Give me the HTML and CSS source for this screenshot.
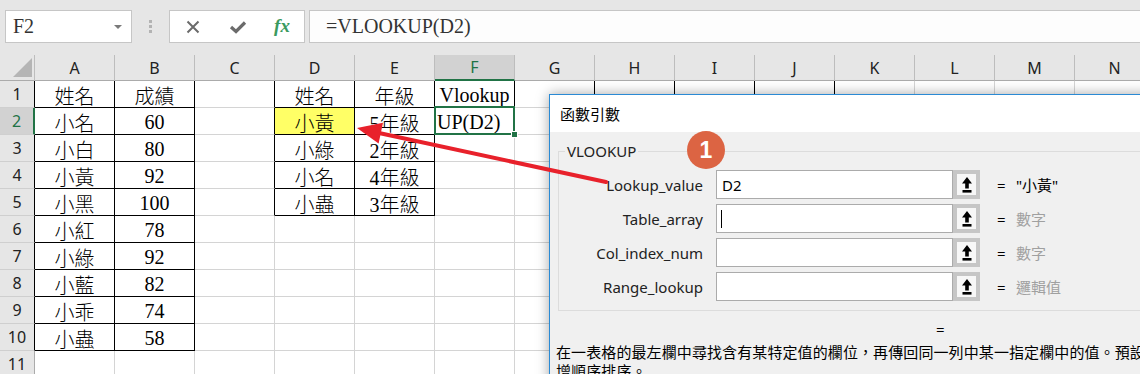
FILE: index.html
```html
<!DOCTYPE html>
<html lang="zh-Hant">
<head>
  <meta charset="UTF-8" />
  <title>VLOOKUP 函數引數</title>
  <link rel="stylesheet" href="styles.css">
</head>
<body>

  <div class="toolbar">
    <div class="namebox">F2<span class="caret-down"></span></div>
    <div class="grip"><span></span><span></span><span></span></div>
    <div class="fx-buttons">
      <svg width="14" height="14" viewBox="0 0 14 14"><path d="M1.5 1.5 L12.5 12.5 M12.5 1.5 L1.5 12.5" stroke="#6b6b6b" stroke-width="2" fill="none"/></svg>
      <svg width="18" height="14" viewBox="0 0 18 14"><path d="M2 7 L7 11.5 L16 2.5" stroke="#6b6b6b" stroke-width="3.2" fill="none"/></svg>
      <span class="fx">fx</span>
    </div>
    <div class="formula">=VLOOKUP(D2)</div>
  </div>

  <div class="sheet">
    <!-- encabezado de columnas -->
    <div class="corner"></div>
    <div class="ch">A</div><div class="ch">B</div><div class="ch">C</div><div class="ch">D</div><div class="ch">E</div>
    <div class="ch on">F</div><div class="ch">G</div><div class="ch">H</div><div class="ch">I</div><div class="ch">J</div>
    <div class="ch">K</div><div class="ch">L</div><div class="ch">M</div><div class="ch">N</div>

    <div class="rh kr">1</div><div class="k">姓名</div><div class="k">成績</div><div class="kr"></div><div class="k">姓名</div><div class="k">年級</div>
    <div class="kr">Vlookup</div><div class="kr"></div><div class="kr"></div><div class="kr"></div><div class="kr"></div><div></div><div></div><div></div><div></div>

    <div class="rh kr on">2</div><div class="k">小名</div><div class="k">60</div><div class="kr"></div><div class="k yl">小黃</div><div class="k">5年級</div>
    <div class="sel">UP(D2)</div><div></div><div></div><div></div><div></div><div></div><div></div><div></div><div></div>

    <div class="rh kr">3</div><div class="k">小白</div><div class="k">80</div><div class="kr"></div><div class="k">小綠</div><div class="k">2年級</div>
    <div></div><div></div><div></div><div></div><div></div><div></div><div></div><div></div><div></div>

    <div class="rh kr">4</div><div class="k">小黃</div><div class="k">92</div><div class="kr"></div><div class="k">小名</div><div class="k">4年級</div>
    <div></div><div></div><div></div><div></div><div></div><div></div><div></div><div></div><div></div>

    <div class="rh kr">5</div><div class="k">小黑</div><div class="k">100</div><div class="kr"></div><div class="k">小蟲</div><div class="k">3年級</div>
    <div></div><div></div><div></div><div></div><div></div><div></div><div></div><div></div><div></div>

    <div class="rh kr">6</div><div class="k">小紅</div><div class="k">78</div><div></div><div></div><div></div>
    <div></div><div></div><div></div><div></div><div></div><div></div><div></div><div></div><div></div>

    <div class="rh kr">7</div><div class="k">小綠</div><div class="k">92</div><div></div><div></div><div></div>
    <div></div><div></div><div></div><div></div><div></div><div></div><div></div><div></div><div></div>

    <div class="rh kr">8</div><div class="k">小藍</div><div class="k">82</div><div></div><div></div><div></div>
    <div></div><div></div><div></div><div></div><div></div><div></div><div></div><div></div><div></div>

    <div class="rh kr">9</div><div class="k">小乖</div><div class="k">74</div><div></div><div></div><div></div>
    <div></div><div></div><div></div><div></div><div></div><div></div><div></div><div></div><div></div>

    <div class="rh kr">10</div><div class="k">小蟲</div><div class="k">58</div><div></div><div></div><div></div>
    <div></div><div></div><div></div><div></div><div></div><div></div><div></div><div></div><div></div>

    <div class="rh">11</div><div></div><div></div><div></div><div></div><div></div>
    <div></div><div></div><div></div><div></div><div></div><div></div><div></div><div></div><div></div>
  </div>

  <!-- ventana de argumentos -->
  <div class="dialog">
    <div class="dialog-title">函數引數</div>
    <fieldset class="args">
      <legend>VLOOKUP</legend>
      <div class="arg-grid">
        <label>Lookup_value</label>
        <div class="arg-input">D2</div>
        <div class="ref-btn"><svg width="12" height="18" viewBox="0 0 12 18"><path d="M6 1 L11 7.5 L7.8 7.5 L7.8 12.5 L4.2 12.5 L4.2 7.5 L1 7.5 Z"/><rect x="1.5" y="14" width="9" height="2.6"/></svg></div>
        <span class="eq">=</span>
        <span class="val">"小黃"</span>

        <label>Table_array</label>
        <div class="arg-input"><span class="text-caret"></span></div>
        <div class="ref-btn"><svg width="12" height="18" viewBox="0 0 12 18"><path d="M6 1 L11 7.5 L7.8 7.5 L7.8 12.5 L4.2 12.5 L4.2 7.5 L1 7.5 Z"/><rect x="1.5" y="14" width="9" height="2.6"/></svg></div>
        <span class="eq">=</span>
        <span class="val hint">數字</span>

        <label>Col_index_num</label>
        <div class="arg-input"></div>
        <div class="ref-btn"><svg width="12" height="18" viewBox="0 0 12 18"><path d="M6 1 L11 7.5 L7.8 7.5 L7.8 12.5 L4.2 12.5 L4.2 7.5 L1 7.5 Z"/><rect x="1.5" y="14" width="9" height="2.6"/></svg></div>
        <span class="eq">=</span>
        <span class="val hint">數字</span>

        <label>Range_lookup</label>
        <div class="arg-input"></div>
        <div class="ref-btn"><svg width="12" height="18" viewBox="0 0 12 18"><path d="M6 1 L11 7.5 L7.8 7.5 L7.8 12.5 L4.2 12.5 L4.2 7.5 L1 7.5 Z"/><rect x="1.5" y="14" width="9" height="2.6"/></svg></div>
        <span class="eq">=</span>
        <span class="val hint">邏輯值</span>
      </div>
    </fieldset>
    <div class="result-eq">=</div>
    <div class="desc">
      <div>在一表格的最左欄中尋找含有某特定值的欄位，再傳回同一列中某一指定欄中的值。預設情況下表格必須以遞</div>
      <div>增順序排序。</div>
    </div>
  </div>

  <svg class="arrow" width="1140" height="374" viewBox="0 0 1140 374">
    <line x1="606" y1="182" x2="379" y2="133" stroke="#e8212b" stroke-width="4" stroke-linecap="round"/>
    <polygon points="357,128 383,122.8 378.6,143.4" fill="#e8212b"/>
  </svg>
  <div class="badge">1</div>

</body>
</html>
```

FILE: styles.css
```css
body {
  margin: 0;
  width: 1140px;
  height: 374px;
  overflow: hidden;
  position: relative;
  background-color: #ffffff;
  font-family: "Noto Sans", "Noto Sans CJK TC", sans-serif;
}

/* barra de fórmulas */
.toolbar {
  height: 55px;
  box-sizing: border-box;
  padding: 10px 0 0 5px;
  display: flex;
  align-items: flex-start;
  background-color: #e6e6e6;
}

.namebox {
  width: 127px;
  height: 33px;
  box-sizing: border-box;
  padding: 0 9px 0 7px;
  display: flex;
  align-items: center;
  justify-content: space-between;
  background-color: #ffffff;
  border: 1px solid #c6c6c6;
  font: 20px "Liberation Serif", serif;
  color: #333;
}

.caret-down {
  border-left: 4px solid transparent;
  border-right: 4px solid transparent;
  border-top: 4px solid #7a7a7a;
}

.grip {
  width: 37px;
  height: 33px;
  display: flex;
  flex-direction: column;
  align-items: center;
  justify-content: center;
  gap: 2px;
}

.grip span {
  width: 3px;
  height: 3px;
  background-color: #b3b3b3;
}

.fx-buttons {
  width: 136px;
  height: 33px;
  box-sizing: border-box;
  display: grid;
  grid-template-columns: 45px 45px 44px;
  justify-items: center;
  align-items: center;
  background-color: #ffffff;
  border: 1px solid #c6c6c6;
}

.fx {
  font: italic bold 19px "Liberation Serif", serif;
  color: #3b9a5f;
  margin-top: -2px;
}

.formula {
  flex: 1;
  height: 33px;
  margin-left: 4px;
  box-sizing: border-box;
  padding-left: 16px;
  display: flex;
  align-items: center;
  background-color: #fdfdfd;
  border: 1px solid #c6c6c6;
  border-right: none;
  font: 20px "Liberation Serif", serif;
  color: #333;
}

/* hoja */
.sheet {
  display: grid;
  grid-template-columns: 35px repeat(14, 80px);
  grid-template-rows: 26px;
  grid-auto-rows: 27px;
}

.sheet > div {
  box-sizing: border-box;
  border-right: 1px solid #d4d4d4;
  border-bottom: 1px solid #d4d4d4;
  display: flex;
  align-items: center;
  justify-content: center;
  padding-top: 2px;
  overflow: hidden;
  white-space: nowrap;
  font: 300 20px "Liberation Serif", "Noto Sans CJK TC", serif;
  color: #000;
}

.sheet > .corner {
  background-color: #e6e6e6;
  border-right-color: #bdbdbd;
  border-bottom-color: #ababab;
  position: relative;
}

.corner::after {
  content: "";
  position: absolute;
  left: 13px;
  top: 3px;
  width: 19px;
  height: 19px;
  background-color: #b5b5b5;
  clip-path: polygon(100% 0, 100% 100%, 0 100%);
}

.sheet > .ch {
  background-color: #e6e6e6;
  border-right-color: #bdbdbd;
  border-bottom-color: #ababab;
  padding-top: 0;
  font: 16px "Noto Sans", sans-serif;
  color: #222;
}

.sheet > .ch.on {
  background-color: #d2d2d2;
  color: #217346;
  border-bottom: 2px solid #217346;
}

.sheet > .rh {
  background-color: #e6e6e6;
  border-right-color: #ababab;
  border-bottom-color: #cfcfcf;
  padding-top: 0;
  font: 16px "Noto Sans", sans-serif;
  color: #222;
}

.sheet > .kr {
  border-right-color: #000;
}

.sheet > .k {
  border-right-color: #000;
  border-bottom-color: #000;
}

.sheet > .rh.on {
  background-color: #d2d2d2;
  color: #217346;
  border-right: 2px solid #217346;
}

.sheet > .yl {
  background-color: #ffff66;
}

.sheet > .sel {
  justify-content: flex-start;
  padding-left: 2px;
  overflow: visible;
  position: relative;
}

.sel::after {
  content: "";
  position: absolute;
  left: -1px;
  top: -2px;
  right: -1px;
  bottom: -1px;
  border: 2px solid #217346;
}

.sel::before {
  content: "";
  position: absolute;
  right: -4px;
  bottom: -4px;
  width: 5px;
  height: 5px;
  background-color: #217346;
  border: 1px solid #ffffff;
  z-index: 1;
}

/* diálogo */
.dialog {
  position: absolute;
  left: 549px;
  top: 94px;
  width: 620px;
  height: 300px;
  background-color: #f0f0f0;
  border: 1px solid #2a8ad4;
  box-shadow: 0 0 12px rgba(0, 0, 0, 0.35);
  font-size: 15px;
  color: #000;
}

.dialog-title {
  height: 37px;
  padding-left: 10px;
  display: flex;
  align-items: center;
  background-color: #ffffff;
  font-family: "Noto Sans CJK TC", sans-serif;
}

.args {
  margin: 9px 8px 0 8px;
  padding: 9px 0 9px 0;
  border: 1px solid #dcdcdc;
}

.args legend {
  margin-left: 6px;
  padding: 0 2px;
  line-height: 20px;
  color: #222;
}

.arg-grid {
  display: grid;
  grid-template-columns: 157px 237px 27px 36px auto;
  grid-auto-rows: 29px;
  row-gap: 5px;
  align-items: center;
}

.arg-grid label {
  padding-right: 13px;
  text-align: right;
  color: #222;
}

.arg-input {
  height: 29px;
  box-sizing: border-box;
  padding-left: 5px;
  display: flex;
  align-items: center;
  background-color: #ffffff;
  border: 1px solid #ababab;
}

.text-caret {
  width: 1px;
  height: 18px;
  background-color: #000;
  margin-left: -1px;
}

.ref-btn {
  height: 29px;
  box-sizing: border-box;
  display: flex;
  align-items: center;
  justify-content: center;
  background-color: #f7f7f7;
  border: 4px solid #c6c6c6;
}

.eq {
  padding-left: 17px;
}

.val {
  font-family: "Noto Sans", "Noto Sans CJK TC", sans-serif;
}

.val.hint {
  color: #a0a0a0;
}

.result-eq {
  margin-top: 8px;
  padding-left: 386px;
  line-height: 20px;
}

.desc {
  margin-top: 3px;
  padding-left: 6px;
  line-height: 19px;
  white-space: nowrap;
  letter-spacing: 0.1px;
  font-family: "Noto Sans CJK TC", sans-serif;
}

/* anotaciones */
.arrow {
  position: absolute;
  left: 0;
  top: 0;
  pointer-events: none;
}

.badge {
  position: absolute;
  left: 687px;
  top: 131px;
  width: 38px;
  height: 38px;
  border-radius: 50%;
  display: flex;
  align-items: center;
  justify-content: center;
  background-color: #dc6443;
  color: #ffffff;
  font: bold 23px "Liberation Sans", sans-serif;
}
```
